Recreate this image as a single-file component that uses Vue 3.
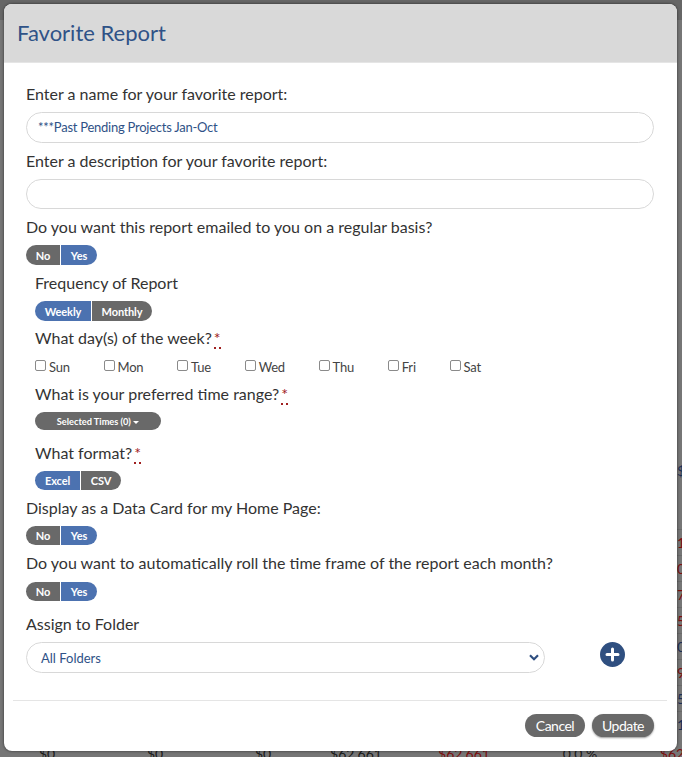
<template>
  <div class="backdrop">
    <!-- report table showing under the dimmed backdrop -->
    <div class="edge-row">
      <span v-for="(cell, i) in bottomCells" :key="i" class="edge-cell" :class="{ neg: cell.neg }">{{ cell.text }}</span>
    </div>
    <div class="edge-col">
      <span class="edge-head">$</span>
      <span v-for="(cell, i) in sideCells" :key="i" class="edge-val" :class="{ neg: cell.neg }">{{ cell.text }}</span>
    </div>

    <div class="modal">
      <div class="modal-header">
        <h4 class="modal-title">Favorite Report</h4>
      </div>
      <div class="modal-body">
        <label class="field-label">Enter a name for your favorite report:</label>
        <input class="pill-input" type="text" value="***Past Pending Projects Jan-Oct" />
        <label class="field-label">Enter a description for your favorite report:</label>
        <input class="pill-input" type="text" />
        <label class="field-label">Do you want this report emailed to you on a regular basis?</label>
        <div class="toggle">
          <span class="tg tg-off w-no">No</span><span class="tg tg-on w-yes">Yes</span>
        </div>

        <div class="email-options">
          <label class="sub-label">Frequency of Report</label>
          <div class="toggle tight">
            <span class="tg tg-on w-week">Weekly</span><span class="tg tg-off w-month">Monthly</span>
          </div>
          <label class="sub-label">What day(s) of the week?<span class="req">*</span></label>
          <div class="days">
            <label v-for="day in days" :key="day" class="day">
              <input type="checkbox" />
              <span>{{ day }}</span>
            </label>
          </div>
          <label class="sub-label">What is your preferred time range?<span class="req">*</span></label>
          <button class="times-btn">Selected Times (0) <span class="caret"></span></button>
          <label class="sub-label">What format?<span class="req">*</span></label>
          <div class="toggle short">
            <span class="tg tg-on w-excel">Excel</span><span class="tg tg-off w-csv">CSV</span>
          </div>
        </div>

        <label class="field-label">Display as a Data Card for my Home Page:</label>
        <div class="toggle short">
          <span class="tg tg-off w-no">No</span><span class="tg tg-on w-yes">Yes</span>
        </div>
        <label class="field-label">Do you want to automatically roll the time frame of the report each month?</label>
        <div class="toggle short last">
          <span class="tg tg-off w-no">No</span><span class="tg tg-on w-yes">Yes</span>
        </div>
        <label class="field-label">Assign to Folder</label>
        <div class="folder-row">
          <div class="pill-select">
            <span>All Folders</span>
            <svg class="chevron" width="10" height="7" viewBox="0 0 10 7">
              <path d="M1 1.2 5 5.2l4-4" fill="none" stroke="#2f4f80" stroke-width="2.2" />
            </svg>
          </div>
          <svg class="add-icon" width="25" height="25" viewBox="0 0 25 25">
            <circle cx="12.5" cy="12.5" r="12.5" fill="#2f4f80" />
            <path d="M12.5 7v11M7 12.5h11" stroke="#fff" stroke-width="3" stroke-linecap="round" />
          </svg>
        </div>
      </div>
      <div class="modal-footer">
        <button class="foot-btn cancel">Cancel</button>
        <button class="foot-btn update">Update</button>
      </div>
    </div>
  </div>
</template>

<script setup>
const days = ['Sun', 'Mon', 'Tue', 'Wed', 'Thu', 'Fri', 'Sat']

const bottomCells = [
  { text: '$0' },
  { text: '$0' },
  { text: '$0' },
  { text: '$62,661' },
  { text: '$62,661', neg: true },
  { text: '0.0 %' },
  { text: '$62', neg: true },
]

const sideCells = [
  { text: '1', neg: true },
  { text: '0', neg: true },
  { text: '7', neg: true },
  { text: '5', neg: true },
  { text: '0' },
  { text: '9', neg: true },
  { text: '5' },
  { text: '1' },
]
</script>

<style>
html,
body {
  margin: 0;
  background: #767676;
}
</style>

<style scoped>
.backdrop {
  position: relative;
  width: 682px;
  height: 757px;
  overflow: hidden;
  background: linear-gradient(#666 0, #666 20px, #767676 20px);
  font-family: Lato, "Liberation Sans", sans-serif;
  color: #333;
}

.edge-row {
  position: absolute;
  left: 0;
  top: 745px;
  display: grid;
  grid-template-columns: 94px 122px 94px 92px 124px 108px 76px;
  font-size: 14px;
  line-height: 17px;
  color: #1a1a1a;
}

.edge-cell {
  text-align: center;
}

.edge-cell.neg {
  color: #7d0f0f;
}

.edge-col {
  position: absolute;
  left: 677px;
  top: 462px;
  width: 8px;
  display: flex;
  flex-direction: column;
  font-size: 14px;
  color: #1c2f55;
}

.edge-head {
  height: 67px;
  line-height: 17px;
  text-align: right;
}

.edge-val {
  height: 26px;
  line-height: 26px;
  text-align: right;
  border-top: 1px solid #6a6a6a;
  box-sizing: border-box;
}

.neg {
  color: #7d0f0f;
}

.modal {
  position: absolute;
  left: 4px;
  top: 4px;
  width: 673px;
  height: 747px;
  box-sizing: border-box;
  display: flex;
  flex-direction: column;
  background: #fff;
  border-radius: 8px;
  box-shadow: 0 0 3px rgba(0, 0, 0, 0.6);
  overflow: hidden;
}

.modal-header {
  height: 56px;
  padding: 0 13px 2px;
  display: flex;
  align-items: center;
  background: #d9d9d9;
  border-bottom: 1px solid #e5e5e5;
  box-sizing: content-box;
  flex: none;
}

.modal-title {
  margin: 0;
  font-size: 22px;
  font-weight: 400;
  color: #2f5287;
}

.modal-body {
  flex: 1;
  padding: 20px 23px 0 22px;
}

.field-label,
.sub-label {
  display: block;
  font-size: 16px;
  line-height: 22px;
  color: #333;
}

.pill-input {
  display: block;
  width: 100%;
  height: 30.5px;
  box-sizing: border-box;
  margin: 7px 0;
  padding: 0 11px;
  border: 1px solid #d8d8d8;
  border-radius: 16px;
  outline: none;
  font-family: inherit;
  font-size: 13px;
  letter-spacing: -0.25px;
  color: #2f5287;
  background: #fff;
}

.toggle {
  display: flex;
  gap: 1px;
  margin: 7px 0;
  width: max-content;
}

.toggle.tight {
  margin-bottom: 6px;
}

.toggle.short .tg {
  height: 19px;
}

.toggle.short {
  margin-bottom: 7px;
}

.toggle.last {
  margin-top: 8px;
  margin-bottom: 12px;
}

.tg {
  height: 20px;
  box-sizing: border-box;
  display: flex;
  align-items: center;
  justify-content: center;
  font-size: 11px;
  font-weight: 700;
  letter-spacing: -0.1px;
  color: #fff;
}

.w-no {
  width: 34px;
}

.w-yes {
  width: 36px;
}

.w-week {
  width: 56px;
}

.w-month {
  width: 60px;
}

.w-excel {
  width: 45px;
}

.w-csv {
  width: 40px;
}

.tg-off {
  background: #696969;
}

.tg-on {
  background: #4c72b0;
}

.tg:first-child {
  border-radius: 10px 0 0 10px;
}

.tg:last-child {
  border-radius: 0 10px 10px 0;
}

.email-options {
  padding-left: 9px;
}

.req {
  margin-left: 2px;
  color: #a02020;
  border-bottom: 2px dotted #a02020;
  line-height: 1;
}

.days {
  display: flex;
  gap: 33.7px;
  height: 17px;
  margin: 9px 0 8px;
}

.day {
  display: flex;
  align-items: center;
  gap: 3px;
  font-size: 13px;
  letter-spacing: -0.2px;
  color: #444;
}

.day input {
  width: 11px;
  height: 11px;
  margin: 0 0 2px;
  appearance: none;
  border: 1px solid #8a8a8a;
  border-radius: 2px;
  background: #fff;
}

.times-btn {
  display: block;
  width: 126px;
  height: 18px;
  margin: 7px 0 12px;
  padding: 0;
  border: none;
  border-radius: 9px;
  background: #696969;
  color: #fff;
  font-family: inherit;
  font-size: 9.2px;
  font-weight: 700;
}

.caret {
  display: inline-block;
  vertical-align: middle;
  border-top: 3px solid #fff;
  border-left: 3px solid transparent;
  border-right: 3px solid transparent;
}

.folder-row {
  display: flex;
  align-items: center;
  margin-top: 7px;
}

.pill-select {
  width: 519px;
  height: 31px;
  box-sizing: border-box;
  padding: 0 0 0 14px;
  display: flex;
  align-items: center;
  justify-content: space-between;
  border: 1px solid #d8d8d8;
  border-radius: 16px;
  font-size: 13px;
  color: #2f5287;
}

.chevron {
  margin-right: 5px;
}

.add-icon {
  margin-left: 55px;
  margin-top: -7px;
}

.modal-footer {
  flex: none;
  height: 51px;
  margin: 0 10px 0 9px;
  padding: 0 13px 2px 0;
  box-sizing: border-box;
  display: flex;
  align-items: center;
  justify-content: flex-end;
  gap: 7px;
  border-top: 1px solid #e5e5e5;
}

.foot-btn {
  height: 23px;
  padding: 0;
  border: none;
  border-radius: 12px;
  background: #696969;
  color: #fff;
  font-family: inherit;
  font-size: 14px;
  letter-spacing: -0.5px;
}

.foot-btn.cancel {
  width: 60px;
}

.foot-btn.update {
  width: 62px;
  box-shadow: 0 1px 2px rgba(0, 0, 0, 0.4);
}
</style>
